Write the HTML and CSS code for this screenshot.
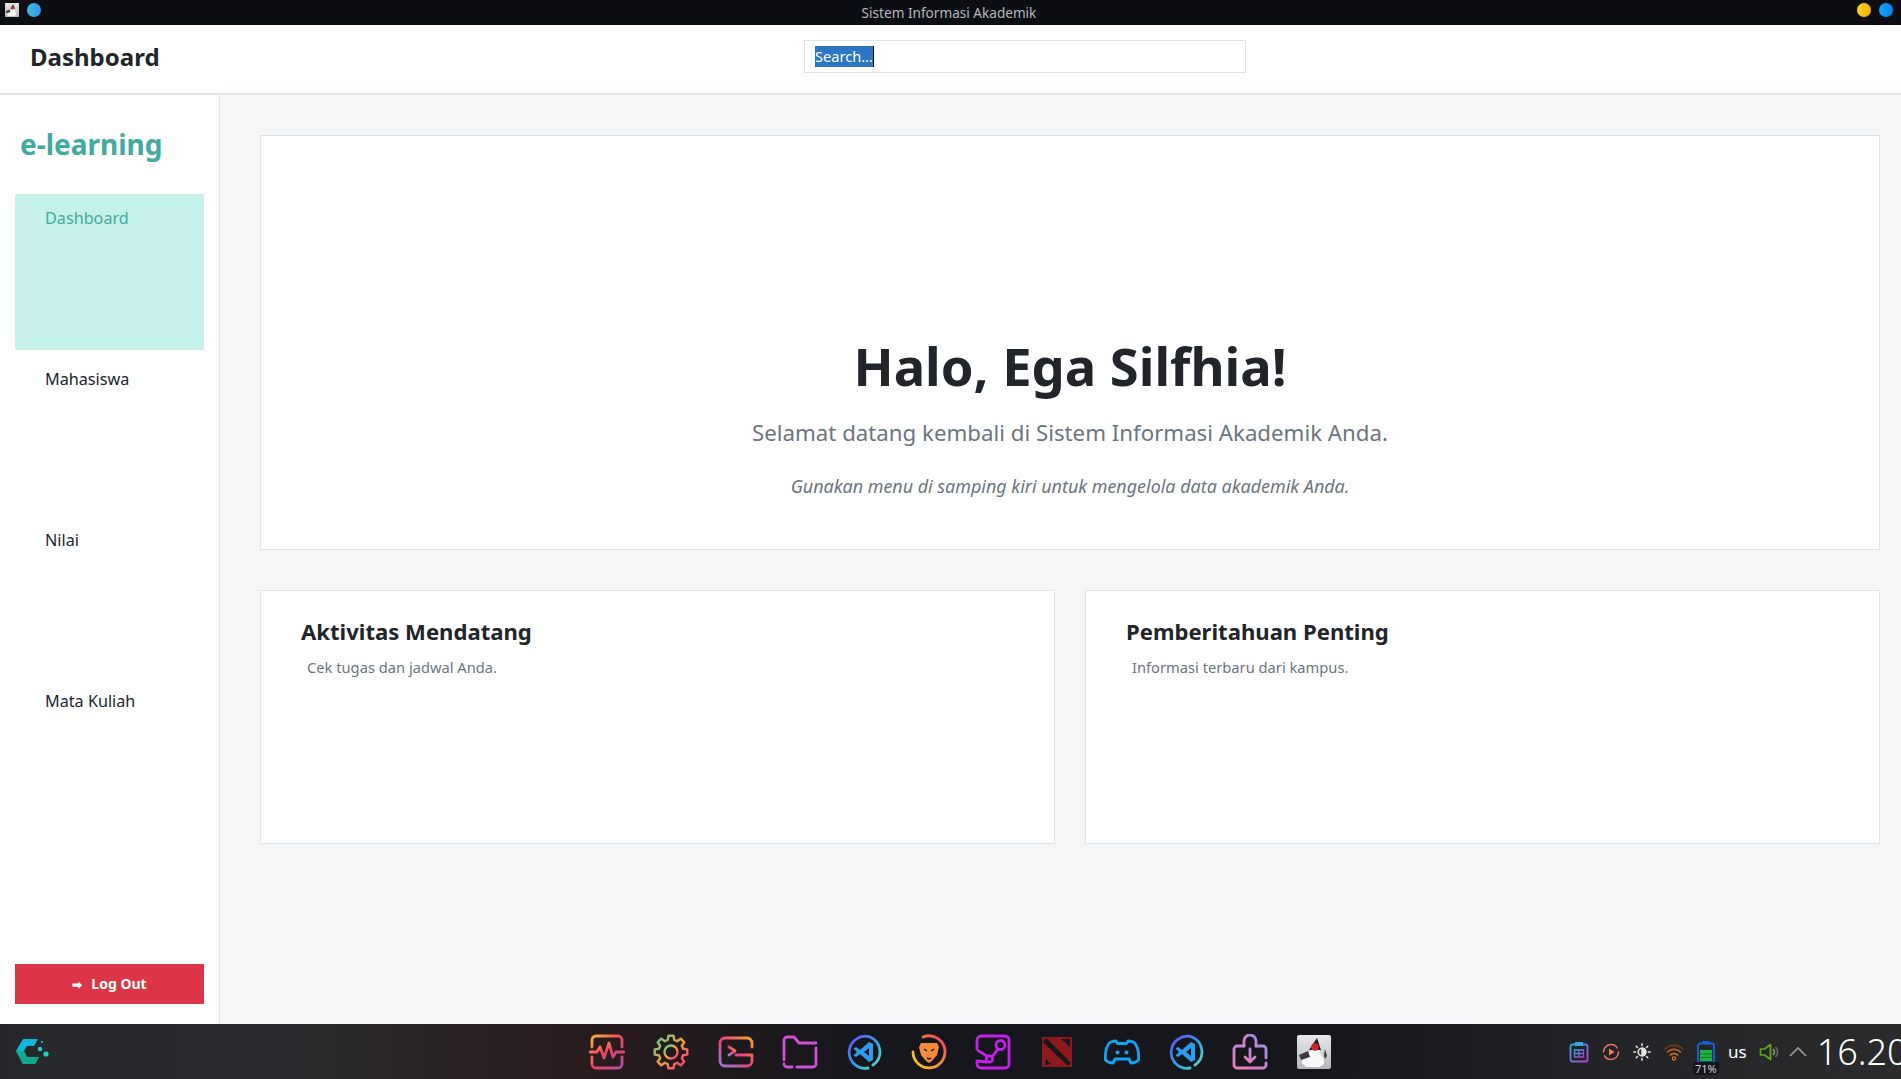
FILE: index.html
```html
<!DOCTYPE html>
<html lang="en">
<head>
    <meta charset="UTF-8">
    <title>Sistem Informasi Akademik</title>
    <link rel="stylesheet" href="styles.css">
</head>
<body>
    <svg class="defs" width="0" height="0">
        <defs>
            <linearGradient id="gPulse" x1="0" y1="0" x2="1" y2="1"><stop offset="0" stop-color="#fbb034"/><stop offset="0.5" stop-color="#f0445c"/><stop offset="1" stop-color="#b04fa8"/></linearGradient>
            <linearGradient id="gGear" x1="0" y1="0" x2="1" y2="1"><stop offset="0" stop-color="#4fd0a0"/><stop offset="0.5" stop-color="#f2a13a"/><stop offset="1" stop-color="#f02c80"/></linearGradient>
            <linearGradient id="gTerm" x1="0" y1="1" x2="1" y2="0"><stop offset="0" stop-color="#8e7fd8"/><stop offset="0.5" stop-color="#e8407c"/><stop offset="1" stop-color="#f9a825"/></linearGradient>
            <linearGradient id="gCode" x1="0" y1="0" x2="1" y2="1"><stop offset="0" stop-color="#6a4cf0"/><stop offset="0.5" stop-color="#2f9cf0"/><stop offset="1" stop-color="#5fe0c0"/></linearGradient>
            <linearGradient id="gBrave" x1="0" y1="1" x2="1" y2="0"><stop offset="0" stop-color="#f9d423"/><stop offset="1" stop-color="#f0405c"/></linearGradient>
            <linearGradient id="gBox" x1="0" y1="1" x2="1" y2="0"><stop offset="0" stop-color="#f27ab8"/><stop offset="1" stop-color="#a58ce8"/></linearGradient>
            <linearGradient id="gClip" x1="0" y1="0" x2="1" y2="1"><stop offset="0" stop-color="#2fa8e0"/><stop offset="1" stop-color="#b83ed0"/></linearGradient>
            <linearGradient id="gJava" x1="0" y1="0" x2="0" y2="1"><stop offset="0" stop-color="#e8e8ea"/><stop offset="1" stop-color="#b4b8be"/></linearGradient>
        </defs>
    </svg>

    <!-- window title bar -->
    <div class="titlebar">
        <div class="title-left">
            <svg class="app-icon" width="14" height="14" viewBox="0 0 34 34"><rect width="34" height="34" rx="2" fill="url(#gJava)"/><path d="M5 29c0-6 3-9 7-11l4-5 6 1 2 6 3 4v5l-4 3H9z" fill="#f6f6f6"/><path d="M13 14L20 3l4 11z" fill="#1e1e22"/><path d="M2 20l9-4 2 6-9 3z" fill="#3a3a3e"/><circle cx="18" cy="12" r="4" fill="#d0262a"/></svg>
            <span class="dot dot-cyan"></span>
        </div>
        <span class="title-text">Sistem Informasi Akademik</span>
        <div class="title-right">
            <span class="dot dot-yellow"></span>
            <span class="dot dot-blue"></span>
        </div>
    </div>

    <header class="topbar">
        <h1>Dashboard</h1>
        <div class="search"><span class="search-sel">Search...</span><span class="caret"></span></div>
    </header>

    <div class="layout">
        <aside class="sidebar">
            <div class="brand">e-learning</div>
            <nav class="menu">
                <a class="menu-item active">Dashboard</a>
                <a class="menu-item">Mahasiswa</a>
                <a class="menu-item">Nilai</a>
                <a class="menu-item">Mata Kuliah</a>
            </nav>
            <button class="logout"><span class="arrow">➡</span>Log Out</button>
        </aside>

        <main class="content">
            <section class="hero">
                <h2>Halo, Ega Silfhia!</h2>
                <p class="lead">Selamat datang kembali di Sistem Informasi Akademik Anda.</p>
                <p class="hint">Gunakan menu di samping kiri untuk mengelola data akademik Anda.</p>
            </section>
            <div class="cards">
                <section class="card">
                    <h3>Aktivitas Mendatang</h3>
                    <p>Cek tugas dan jadwal Anda.</p>
                </section>
                <section class="card">
                    <h3>Pemberitahuan Penting</h3>
                    <p>Informasi terbaru dari kampus.</p>
                </section>
            </div>
        </main>
    </div>

    <!-- desktop panel -->
    <footer class="panel">
        <div class="panel-left">
            <svg width="34" height="27" viewBox="0 0 34 27"><path d="M7 1h15l-4 7h-7l-3 5 3 6h12l-4 7H7L0 13z" fill="#12b4dc"/><path d="M0 13l8 0 3 6h12l-4 7H7z" fill="#12a68c"/><circle cx="24" cy="11" r="2.200" fill="#18d8c8"/><circle cx="30" cy="16" r="2.600" fill="#18d8c8"/><circle cx="26" cy="4" r="1" fill="#18d8c8"/></svg>
        </div>
        <div class="dock">
            <!-- pulse -->
            <svg width="36" height="36" viewBox="0 0 36 36" fill="none" stroke="url(#gPulse)" stroke-width="2.800" stroke-linecap="round" stroke-linejoin="round"><path d="M3 13V6a4 4 0 0 1 4-4h22a4 4 0 0 1 4 4v7M3 23v7a4 4 0 0 0 4 4h22a4 4 0 0 0 4-4v-7"/><path d="M1 18h7l3-5 4 11 5-15 4 14 3-5h8"/></svg>
            <!-- gear -->
            <svg width="36" height="36" viewBox="0 0 36 36" fill="none" stroke="url(#gGear)" stroke-width="2.400" stroke-linejoin="round"><path d="M14.76 5.93L15.42 1.7H20.58L21.24 5.93L24.24 7.18L27.7 4.65L31.35 8.3L28.82 11.76L30.07 14.76L34.3 15.42V20.58L30.07 21.24L28.82 24.24L31.35 27.7L27.7 31.35L24.24 28.82L21.24 30.07L20.58 34.3H15.42L14.76 30.07L11.76 28.82L8.3 31.35L4.65 27.7L7.18 24.24L5.93 21.24L1.7 20.58V15.42L5.93 14.76L7.18 11.76L4.65 8.3L8.3 4.65L11.76 7.18z"/><circle cx="18" cy="18" r="6.500"/></svg>
            <!-- terminal -->
            <svg width="36" height="32" viewBox="0 0 36 32" fill="none" stroke="url(#gTerm)" stroke-width="2.800" stroke-linecap="round" stroke-linejoin="round"><path d="M34 11V7a5 5 0 0 0-5-5H7a5 5 0 0 0-5 5v18a5 5 0 0 0 5 5h22a5 5 0 0 0 5-5v-6H18"/><path d="M11 11l6 4-6 4"/></svg>
            <!-- folder -->
            <svg width="36" height="34" viewBox="0 0 36 34" fill="none" stroke="#cf52d8" stroke-width="2.800" stroke-linecap="round" stroke-linejoin="round"><path d="M34 8H17l-5-6H5a3 3 0 0 0-3 3v20M2 29a3 3 0 0 0 3 3h5M15 32h16a3 3 0 0 0 3-3V13"/></svg>
            <!-- vscode -->
            <svg width="36" height="36" viewBox="0 0 36 36" fill="none"><path d="M24 3a16 16 0 0 1 3 28M22 34A16 16 0 1 1 24 3" stroke="url(#gCode)" stroke-width="2.800" stroke-linecap="round"/><path d="M23 8l4 2v16l-4 2-9-8-4 3-2.500-1.500 3.500-3.500-3.500-3.500L10 13l4 3zM23 14l-5 4 5 4z" fill="#2a9df4" fill-rule="evenodd"/></svg>
            <!-- brave -->
            <svg width="36" height="36" viewBox="0 0 36 36" fill="none"><path d="M12 3a16 16 0 1 1-10 15" stroke="url(#gBrave)" stroke-width="2.800" stroke-linecap="round"/><path d="M10 9h16l2 4-2 8-5 6-3 2-3-2-5-6-2-8z" fill="#f58b3a"/><path d="M13 15l3 2M23 15l-3 2M16 24l2 1 2-1" stroke="#1a1b20" stroke-width="1.500" fill="none"/></svg>
            <!-- steam -->
            <svg width="36" height="36" viewBox="0 0 36 36" fill="none" stroke="#c41fe8" stroke-width="2.800" stroke-linejoin="round"><path d="M2 16V6a4 4 0 0 1 4-4h24a4 4 0 0 1 4 4v24a4 4 0 0 1-4 4H6a4 4 0 0 1-4-4v-3l10 1"/><path d="M2 16l10 6"/><path d="M17 23l6-8"/><circle cx="25.500" cy="11" r="4.500"/><circle cx="14.500" cy="25" r="3.200"/></svg>
            <!-- dota -->
            <svg width="30" height="30" viewBox="0 0 30 30"><rect width="30" height="30" fill="#8c1a1c"/><path d="M4 1l25 25-3 3L1 5z" fill="#16171c"/><path d="M4 22l5 5-6 1zM19 2l9 0 0 8-3-3z" fill="#16171c"/></svg>
            <!-- discord -->
            <svg width="36" height="28" viewBox="0 0 36 28" fill="none" stroke="#12a4f4" stroke-width="2.800" stroke-linejoin="round"><path d="M12 3c-3 0-6 1-7.500 3C2 10 1 16 1.500 22c2 2 5 3 7.500 3l2-4h14l2 4c2.500 0 5.500-1 7.500-3 .5-6-.5-12-3-16C30 4 27 3 24 3l-1.500 2.500h-9z"/><circle cx="13.500" cy="14.500" r="2" fill="#12a4f4" stroke="none"/><circle cx="22.500" cy="14.500" r="2" fill="#12a4f4" stroke="none"/></svg>
            <!-- vscode -->
            <svg width="36" height="36" viewBox="0 0 36 36" fill="none"><path d="M24 3a16 16 0 0 1 3 28M22 34A16 16 0 1 1 24 3" stroke="url(#gCode)" stroke-width="2.800" stroke-linecap="round"/><path d="M23 8l4 2v16l-4 2-9-8-4 3-2.500-1.500 3.500-3.500-3.500-3.500L10 13l4 3zM23 14l-5 4 5 4z" fill="#2a9df4" fill-rule="evenodd"/></svg>
            <!-- store -->
            <svg width="36" height="36" viewBox="0 0 36 36" fill="none" stroke="url(#gBox)" stroke-width="2.800" stroke-linecap="round" stroke-linejoin="round"><path d="M12 12V7a6 6 0 0 1 12 0v5"/><path d="M12 12H5a3 3 0 0 0-3 3v16a3 3 0 0 0 3 3h26a3 3 0 0 0 3-3v-2M34 24v-9a3 3 0 0 0-3-3h-7"/><path d="M18 15v13M13 23l5 5 5-5"/></svg>
            <!-- java -->
            <svg width="34" height="34" viewBox="0 0 34 34"><rect width="34" height="34" rx="2" fill="url(#gJava)"/><path d="M5 28c0-5 3-9 7-10l4-5 6 1 2 6 3 4v5l-4 3H9z" fill="#f8f8f8"/><path d="M12 15L20 3l4 12z" fill="#1e1e22"/><path d="M2 20l9-4 2 6-9 3z" fill="#3a3a3e"/><path d="M28 14l2 7-2 3-1-4z" fill="#3a3a3e"/><circle cx="18" cy="12" r="3.800" fill="#d0262a"/></svg>
        </div>
        <div class="tray">
            <svg width="20" height="22" viewBox="0 0 20 22" fill="none" stroke="url(#gClip)" stroke-width="1.800"><rect x="1.500" y="3.500" width="17" height="17" rx="2"/><rect x="6" y="1" width="8" height="4" fill="#2fa8e0" stroke="none"/><path d="M5.500 9h9v7h-9zM5.500 12.500h9M10 9v7" stroke-width="1.300"/></svg>
            <svg width="18" height="18" viewBox="0 0 18 18" fill="none"><circle cx="9" cy="9" r="7.500" stroke="#e8705c" stroke-width="1.600" stroke-dasharray="20 3"/><path d="M7 5.500l5.500 3.500L7 12.500z" fill="#ee8060"/></svg>
            <svg width="18" height="18" viewBox="0 0 18 18" fill="none" stroke="#e4e4e4" stroke-width="1.500" stroke-linecap="round"><circle cx="9" cy="9" r="3.800"/><path d="M9 5.200a3.800 3.800 0 0 1 0 7.600z" fill="#e4e4e4"/><path d="M9 .8v1.800M9 15.400v1.800M.8 9h1.800M15.400 9h1.800M3.200 3.200l1.300 1.300M13.500 13.500l1.300 1.300M3.200 14.800l1.300-1.300M13.500 4.500l1.300-1.300"/></svg>
            <svg width="20" height="18" viewBox="0 0 20 18" fill="none" stroke-linecap="round" stroke-width="1.700"><path d="M1 6a13 13 0 0 1 18 0" stroke="#6e3a18"/><path d="M3.500 9a9.500 9.500 0 0 1 13 0" stroke="#c8641c"/><path d="M6.500 12a5 5 0 0 1 7 0" stroke="#e07820"/><circle cx="10" cy="15.500" r="1.600" fill="none" stroke="#e07820" stroke-width="1.200"/></svg>
            <div class="battery">
                <svg width="18" height="22" viewBox="0 0 18 22" fill="none"><rect x="5.500" y="0" width="7" height="3" fill="#1464e8"/><rect x="1" y="2.500" width="16" height="19" rx="2" stroke="#1464e8" stroke-width="1.800"/><rect x="3" y="9" width="12" height="11" fill="#22b040"/><path d="M3 13h12M3 16.500h12" stroke="#0e7a26"/></svg>
                <span class="battery-pct">71%</span>
            </div>
            <span class="kbd">us</span>
            <svg class="speaker" width="20" height="18" viewBox="0 0 20 18" fill="none" stroke-linejoin="round"><path d="M1.500 6v6h4l6 4.500V1.500L5.500 6z" stroke="#5ca818" stroke-width="1.700"/><path d="M14 6a4 4 0 0 1 0 6" stroke="#8a9a80" stroke-width="1.600"/><path d="M16.500 4a7 7 0 0 1 0 10" stroke="#6a6a6a" stroke-width="1.600"/></svg>
            <svg class="chevron" width="18" height="10" viewBox="0 0 18 10" fill="none" stroke="#9a9a9a" stroke-width="1.700"><path d="M1 9l8-8 8 8"/></svg>
            <span class="clock">16.20</span>
        </div>
    </footer>
</body>
</html>
```

FILE: styles.css
```css
* {
    box-sizing: border-box;
}
html, body {
    height: 100%;
}
body {
    font-family: "Noto Sans", sans-serif;
    margin: 0;
    height: 1079px;
    overflow: hidden;
    display: flex;
    flex-direction: column;
    background-color: #f4f6f8;
    color: #212529;
}
.defs {
    position: absolute;
}

/* title bar */
.titlebar {
    height: 25px;
    flex: none;
    background-color: #0d0e14;
    display: flex;
    justify-content: space-between;
    align-items: center;
    padding: 0 8px 5px 5px;
    position: relative;
}
.title-left, .title-right {
    display: flex;
    align-items: center;
    gap: 8px;
}
.title-text {
    position: absolute;
    left: 0;
    right: 3px;
    top: 3px;
    text-align: center;
    font-size: 13.600px;
    line-height: 19px;
    color: #b4b8bc;
}
.dot {
    width: 14px;
    height: 14px;
    border-radius: 50%;
    display: block;
}
.dot-cyan {
    background: linear-gradient(90deg, #2fc4dc, #4a88e8);
}
.dot-yellow {
    background: linear-gradient(90deg, #fcd41c, #f4b010);
}
.dot-blue {
    background: linear-gradient(90deg, #10a8f8, #0a80f0);
}

/* top header */
.topbar {
    height: 70px;
    flex: none;
    background-color: #fff;
    border-bottom: 2px solid #e0e4e8;
    position: relative;
    display: flex;
    align-items: center;
    padding: 0 30px 4px;
}
.topbar h1 {
    margin: 0;
    font-size: 24px;
    font-weight: 700;
    line-height: 32px;
}
.search {
    position: absolute;
    left: 804px;
    top: 15px;
    width: 442px;
    height: 33px;
    border: 1px solid #e0e2e4;
    padding: 5px 10px;
    display: flex;
    font-size: 14.600px;
    line-height: 21px;
}
.search-sel {
    background-color: #2a76c4;
    color: #fff;
}
.caret {
    width: 1px;
    height: 21px;
    background-color: #000;
}

.layout {
    flex: 1;
    display: flex;
    min-height: 0;
}

/* sidebar */
.sidebar {
    width: 220px;
    flex: none;
    background-color: #fff;
    border-right: 1px solid #e0e4e8;
    padding: 29px 15px 20px;
    display: flex;
    flex-direction: column;
}
.brand {
    font-size: 28px;
    font-weight: 700;
    line-height: 40px;
    color: #40ab9f;
    padding-left: 5px;
    margin-bottom: 30px;
}
.menu {
    flex: 1;
    display: flex;
    flex-direction: column;
    gap: 5px;
    margin-bottom: 131px;
}
.menu-item {
    flex: 1;
    padding: 12px 30px;
    font-size: 16.200px;
    line-height: 24px;
    color: #212529;
}
.menu-item.active {
    background-color: #c6f0ea;
    color: #40ab9f;
}
.logout {
    height: 40px;
    flex: none;
    border: none;
    padding: 0 0 2px;
    background-color: #dc3545;
    color: #fff;
    font-family: inherit;
    font-size: 14px;
    font-weight: 700;
    cursor: pointer;
}
.arrow {
    font-size: 12px;
    margin-right: 9px;
}

/* main */
.content {
    flex: 1;
    padding: 40px 21px 0 40px;
    min-width: 0;
}
.hero {
    height: 415px;
    background-color: #fff;
    border: 1px solid #e0e4e8;
    padding-top: 199px;
    text-align: center;
}
.hero h2 {
    margin: 0 0 19px;
    font-size: 52.500px;
    font-weight: 700;
    line-height: 62px;
}
.lead {
    margin: 0 0 23px;
    font-size: 22.250px;
    line-height: 34px;
    color: #6c757d;
}
.hint {
    margin: 0;
    font-size: 17.920px;
    line-height: 27px;
    font-style: italic;
    color: #6c757d;
}
.cards {
    display: grid;
    grid-template-columns: 1fr 1fr;
    gap: 30px;
    margin-top: 40px;
}
.card {
    height: 254px;
    background-color: #fff;
    border: 1px solid #e0e4e8;
    padding: 25px 40px;
}
.card h3 {
    margin: 0 0 11px;
    font-size: 22.100px;
    font-weight: 700;
    line-height: 30px;
}
.card p {
    margin: 0 0 0 6px;
    font-size: 14.700px;
    line-height: 21px;
    color: #6c757d;
}

/* desktop panel */
.panel {
    height: 55px;
    flex: none;
    position: relative;
    display: flex;
    align-items: center;
    justify-content: space-between;
    background: linear-gradient(90deg, #26272b 0, #2a2b2e 15%, #2a1c1e 30%, #16171c 45%, #16171d 70%, #232427 85%, #2b2b2d 100%);
}
.panel-left {
    padding-left: 16px;
    display: flex;
}
.dock {
    position: absolute;
    left: 589px;
    top: 8px;
    display: grid;
    grid-auto-flow: column;
    grid-auto-columns: 64.300px;
    height: 40px;
    align-items: center;
    justify-items: center;
    margin-left: -14px;
}
.tray {
    position: absolute;
    left: 1569px;
    top: 0;
    height: 55px;
    display: flex;
    align-items: center;
    gap: 13px;
    color: #fff;
    white-space: nowrap;
}
.battery {
    position: relative;
    display: flex;
}
.battery-pct {
    position: absolute;
    left: -4px;
    top: 21px;
    padding: 0 2px;
    font-size: 11px;
    line-height: 13px;
    color: #cfd2d6;
    background-color: #14151d;
    border-radius: 3px;
}
.kbd {
    font-size: 17px;
}
.speaker {
    margin-left: -1px;
}
.chevron {
    margin-left: -3px;
}
.clock {
    font-size: 36px;
    font-weight: 300;
    line-height: 46px;
    margin-left: -3px;
}
```
